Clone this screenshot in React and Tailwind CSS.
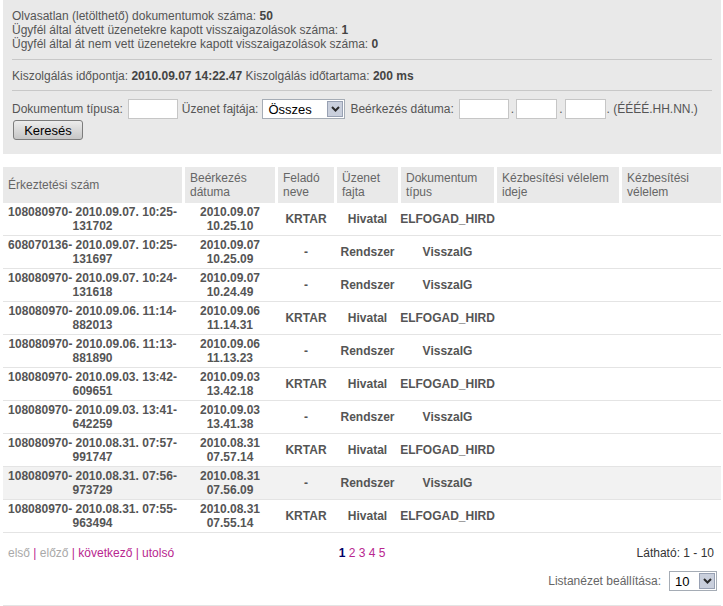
import React from "react";

const rows = [
  ["108080970- 2010.09.07. 10:25-", "131702", "2010.09.07", "10.25.10", "KRTAR", "Hivatal", "ELFOGAD_HIRD"],
  ["608070136- 2010.09.07. 10:25-", "131697", "2010.09.07", "10.25.09", "-", "Rendszer", "VisszaIG"],
  ["108080970- 2010.09.07. 10:24-", "131618", "2010.09.07", "10.24.49", "-", "Rendszer", "VisszaIG"],
  ["108080970- 2010.09.06. 11:14-", "882013", "2010.09.06", "11.14.31", "KRTAR", "Hivatal", "ELFOGAD_HIRD"],
  ["108080970- 2010.09.06. 11:13-", "881890", "2010.09.06", "11.13.23", "-", "Rendszer", "VisszaIG"],
  ["108080970- 2010.09.03. 13:42-", "609651", "2010.09.03", "13.42.18", "KRTAR", "Hivatal", "ELFOGAD_HIRD"],
  ["108080970- 2010.09.03. 13:41-", "642259", "2010.09.03", "13.41.38", "-", "Rendszer", "VisszaIG"],
  ["108080970- 2010.08.31. 07:57-", "991747", "2010.08.31", "07.57.14", "KRTAR", "Hivatal", "ELFOGAD_HIRD"],
  ["108080970- 2010.08.31. 07:56-", "973729", "2010.08.31", "07.56.09", "-", "Rendszer", "VisszaIG"],
  ["108080970- 2010.08.31. 07:55-", "963494", "2010.08.31", "07.55.14", "KRTAR", "Hivatal", "ELFOGAD_HIRD"],
];

const cols = "grid grid-cols-[179px_90px_56px_61px_93px_122px_99px] gap-x-[3px]";

function FakeSelect({ value, width }) {
  return (
    <div className={`relative h-[20px] ${width} bg-white border border-[#a5acb5] flex items-center`}>
      <span className="pl-[5px] text-[13px] text-black leading-none">{value}</span>
      <span className="absolute right-[1px] top-[1px] w-[16px] h-[16px] bg-[#c9cfdc] border border-[#98a1b3] flex items-center justify-center">
        <svg width="9" height="6" viewBox="0 0 9 6">
          <path d="M1 1 L4.5 4.5 L8 1" stroke="#2b2b2b" strokeWidth="2" fill="none" />
        </svg>
      </span>
    </div>
  );
}

const TextInput = ({ width }) => (
  <input type="text" className={`h-[20px] ${width} bg-white border border-[#c6c6c6] outline-none`} />
);

export default function App() {
  return (
    <div className="min-h-screen bg-white font-['Liberation_Sans',Arial,sans-serif] text-[12px] text-[#555]">
      {/* Info / search panel */}
      <div className="ml-[3px] mr-[2px] bg-[#e9e9e9] pt-[9px] pb-[14px]">
        <div className="px-[9px] leading-[14px]">
          <div>Olvasatlan (letölthető) dokumentumok száma: <b className="text-[#444]">50</b></div>
          <div>Ügyfél által átvett üzenetekre kapott visszaigazolások száma: <b className="text-[#444]">1</b></div>
          <div>Ügyfél által át nem vett üzenetekre kapott visszaigazolások száma: <b className="text-[#444]">0</b></div>
        </div>
        <div className="mx-[9px] mt-[8px] border-t border-[#c8c8c8]"></div>
        <div className="px-[9px] mt-[9px] leading-[14px]">
          Kiszolgálás időpontja: <b className="text-[#444]">2010.09.07 14:22.47</b> Kiszolgálás időtartama:{" "}
          <b className="text-[#444]">200 ms</b>
        </div>
        <div className="mx-[9px] mt-[7px] border-t border-[#c8c8c8]"></div>

        <div className="px-[9px] mt-[8px] flex items-center h-[20px]">
          <span>Dokumentum típusa:</span>
          <span className="ml-[5px] mr-[4px]"><TextInput width="w-[50px]" /></span>
          <span>Üzenet fajtája:</span>
          <span className="ml-[4px] mr-[5px]"><FakeSelect value="Összes" width="w-[83px]" /></span>
          <span>Beérkezés dátuma:</span>
          <span className="ml-[5px]"><TextInput width="w-[50px]" /></span>
          <span className="mx-[2px]">.</span>
          <TextInput width="w-[41px]" />
          <span className="mx-[2px]">.</span>
          <TextInput width="w-[41px]" />
          <span className="ml-[1px]">. (ÉÉÉÉ.HH.NN.)</span>
        </div>
        <div className="px-[10px] mt-[1px]">
          <button className="w-[70px] h-[20px] rounded-[3px] border border-[#7c7c7c] bg-gradient-to-b from-[#ececec] to-[#c6c6c6] text-[13px] text-black leading-none">
            Keresés
          </button>
        </div>
      </div>

      {/* Table */}
      <div className="ml-[3px] mr-[2px] mt-[13px]">
        <div className={`${cols} h-[36px] text-[#666] leading-[14px]`}>
          {[
            "Érkeztetési szám",
            <>Beérkezés<br />dátuma</>,
            <>Feladó<br />neve</>,
            <>Üzenet<br />fajta</>,
            <>Dokumentum<br />típus</>,
            <>Kézbesítési vélelem<br />ideje</>,
            <>Kézbesítési<br />vélelem</>,
          ].map((h, i) => (
            <div key={i} className="bg-[#e9e9e9] px-[5px] flex items-center">
              <div>{h}</div>
            </div>
          ))}
        </div>

        {rows.map((r, i) => (
          <div
            key={i}
            className={`${cols} h-[33px] border-b border-[#e4e4e4] font-bold leading-[14px] text-[#555] ${i === 8 ? "bg-[#f2f2f2]" : ""}`}
          >
            <div className="flex flex-col items-center justify-center text-center">
              <div>{r[0]}</div>
              <div>{r[1]}</div>
            </div>
            <div className="flex flex-col items-center justify-center text-center">
              <div>{r[2]}</div>
              <div>{r[3]}</div>
            </div>
            <div className="flex items-center justify-center">{r[4]}</div>
            <div className="flex items-center justify-center">{r[5]}</div>
            <div className="flex items-center justify-center">{r[6]}</div>
            <div></div>
            <div></div>
          </div>
        ))}

        {/* Pager */}
        <div className="border-b border-[#e4e4e4] pt-[13px] h-[73px]">
          <div className="grid grid-cols-3 items-center leading-[14px]">
            <div className="pl-[5px]">
              <span className="text-[#a9a9a9]">első</span>
              <span className="text-[#b8268f]"> | </span>
              <span className="text-[#a9a9a9]">előző</span>
              <span className="text-[#b8268f]"> | következő | utolsó</span>
            </div>
            <div className="text-center">
              <b className="text-[#000066]">1</b>
              <span className="text-[#b8268f]"> 2 3 4 5</span>
            </div>
            <div className="text-right pr-[7px] text-[#333]">Látható: 1 - 10</div>
          </div>
          <div className="mt-[11px] flex items-center justify-end pr-[4px]">
            <span className="text-[#666] mr-[8px]">Listanézet beállítása:</span>
            <FakeSelect value="10" width="w-[48px]" />
          </div>
        </div>
      </div>
    </div>
  );
}
